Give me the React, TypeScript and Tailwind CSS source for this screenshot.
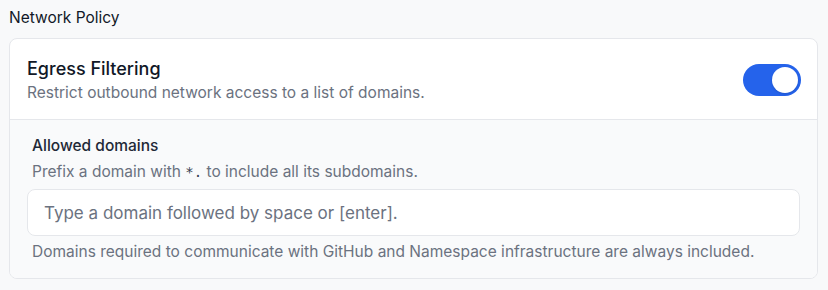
export default function App() {
  return (
    <div className="min-h-[290px] w-[828px] bg-[#f8f9fa] px-[9px] pt-[7px] font-['Inter',sans-serif] text-[#111827]">
      <h2 className="text-[15.5px] leading-[22px] font-normal">Network Policy</h2>
      <div className="mt-[9px] w-[809px] overflow-hidden rounded-lg border border-[#e5e7eb] bg-white">
        <div className="flex items-center justify-between border-b border-[#e5e7eb] px-[17px] pt-[17px] pb-[15px]">
          <div>
            <div className="text-[18px] leading-[26px] font-medium">Egress Filtering</div>
            <div className="text-[15.5px] leading-[22px] text-[#6b7280]">
              Restrict outbound network access to a list of domains.
            </div>
          </div>
          <button
            type="button"
            className="mr-[-1px] flex h-[32px] w-[58px] items-center justify-end rounded-full bg-[#2563eb] p-[3px]"
          >
            <span className="h-[26px] w-[26px] rounded-full bg-white shadow-sm" />
          </button>
        </div>
        <div className="bg-[#f9fafb] px-[17px] pt-[15px] pb-[15px]">
          <div className="px-[5px]">
            <div className="text-[15.5px] leading-[22px] font-medium text-[#1f2937]">Allowed domains</div>
            <div className="mt-[4px] text-[15.5px] leading-[22px] text-[#6b7280]">
              Prefix a domain with <code className="font-['DejaVu_Sans_Mono',monospace] text-[14px] text-[#374151]">*.</code> to include all its subdomains.
            </div>
          </div>
          <input
            className="mt-[6px] block h-[47px] w-full rounded-lg border border-[#e5e7eb] bg-white px-[16px] text-[17px] outline-none placeholder:text-[#6b7280]"
            placeholder="Type a domain followed by space or [enter]."
          />
          <div className="mt-[5px] px-[5px] text-[15.5px] leading-[22px] text-[#6b7280]">
            Domains required to communicate with GitHub and Namespace infrastructure are always included.
          </div>
        </div>
      </div>
    </div>
  );
}
